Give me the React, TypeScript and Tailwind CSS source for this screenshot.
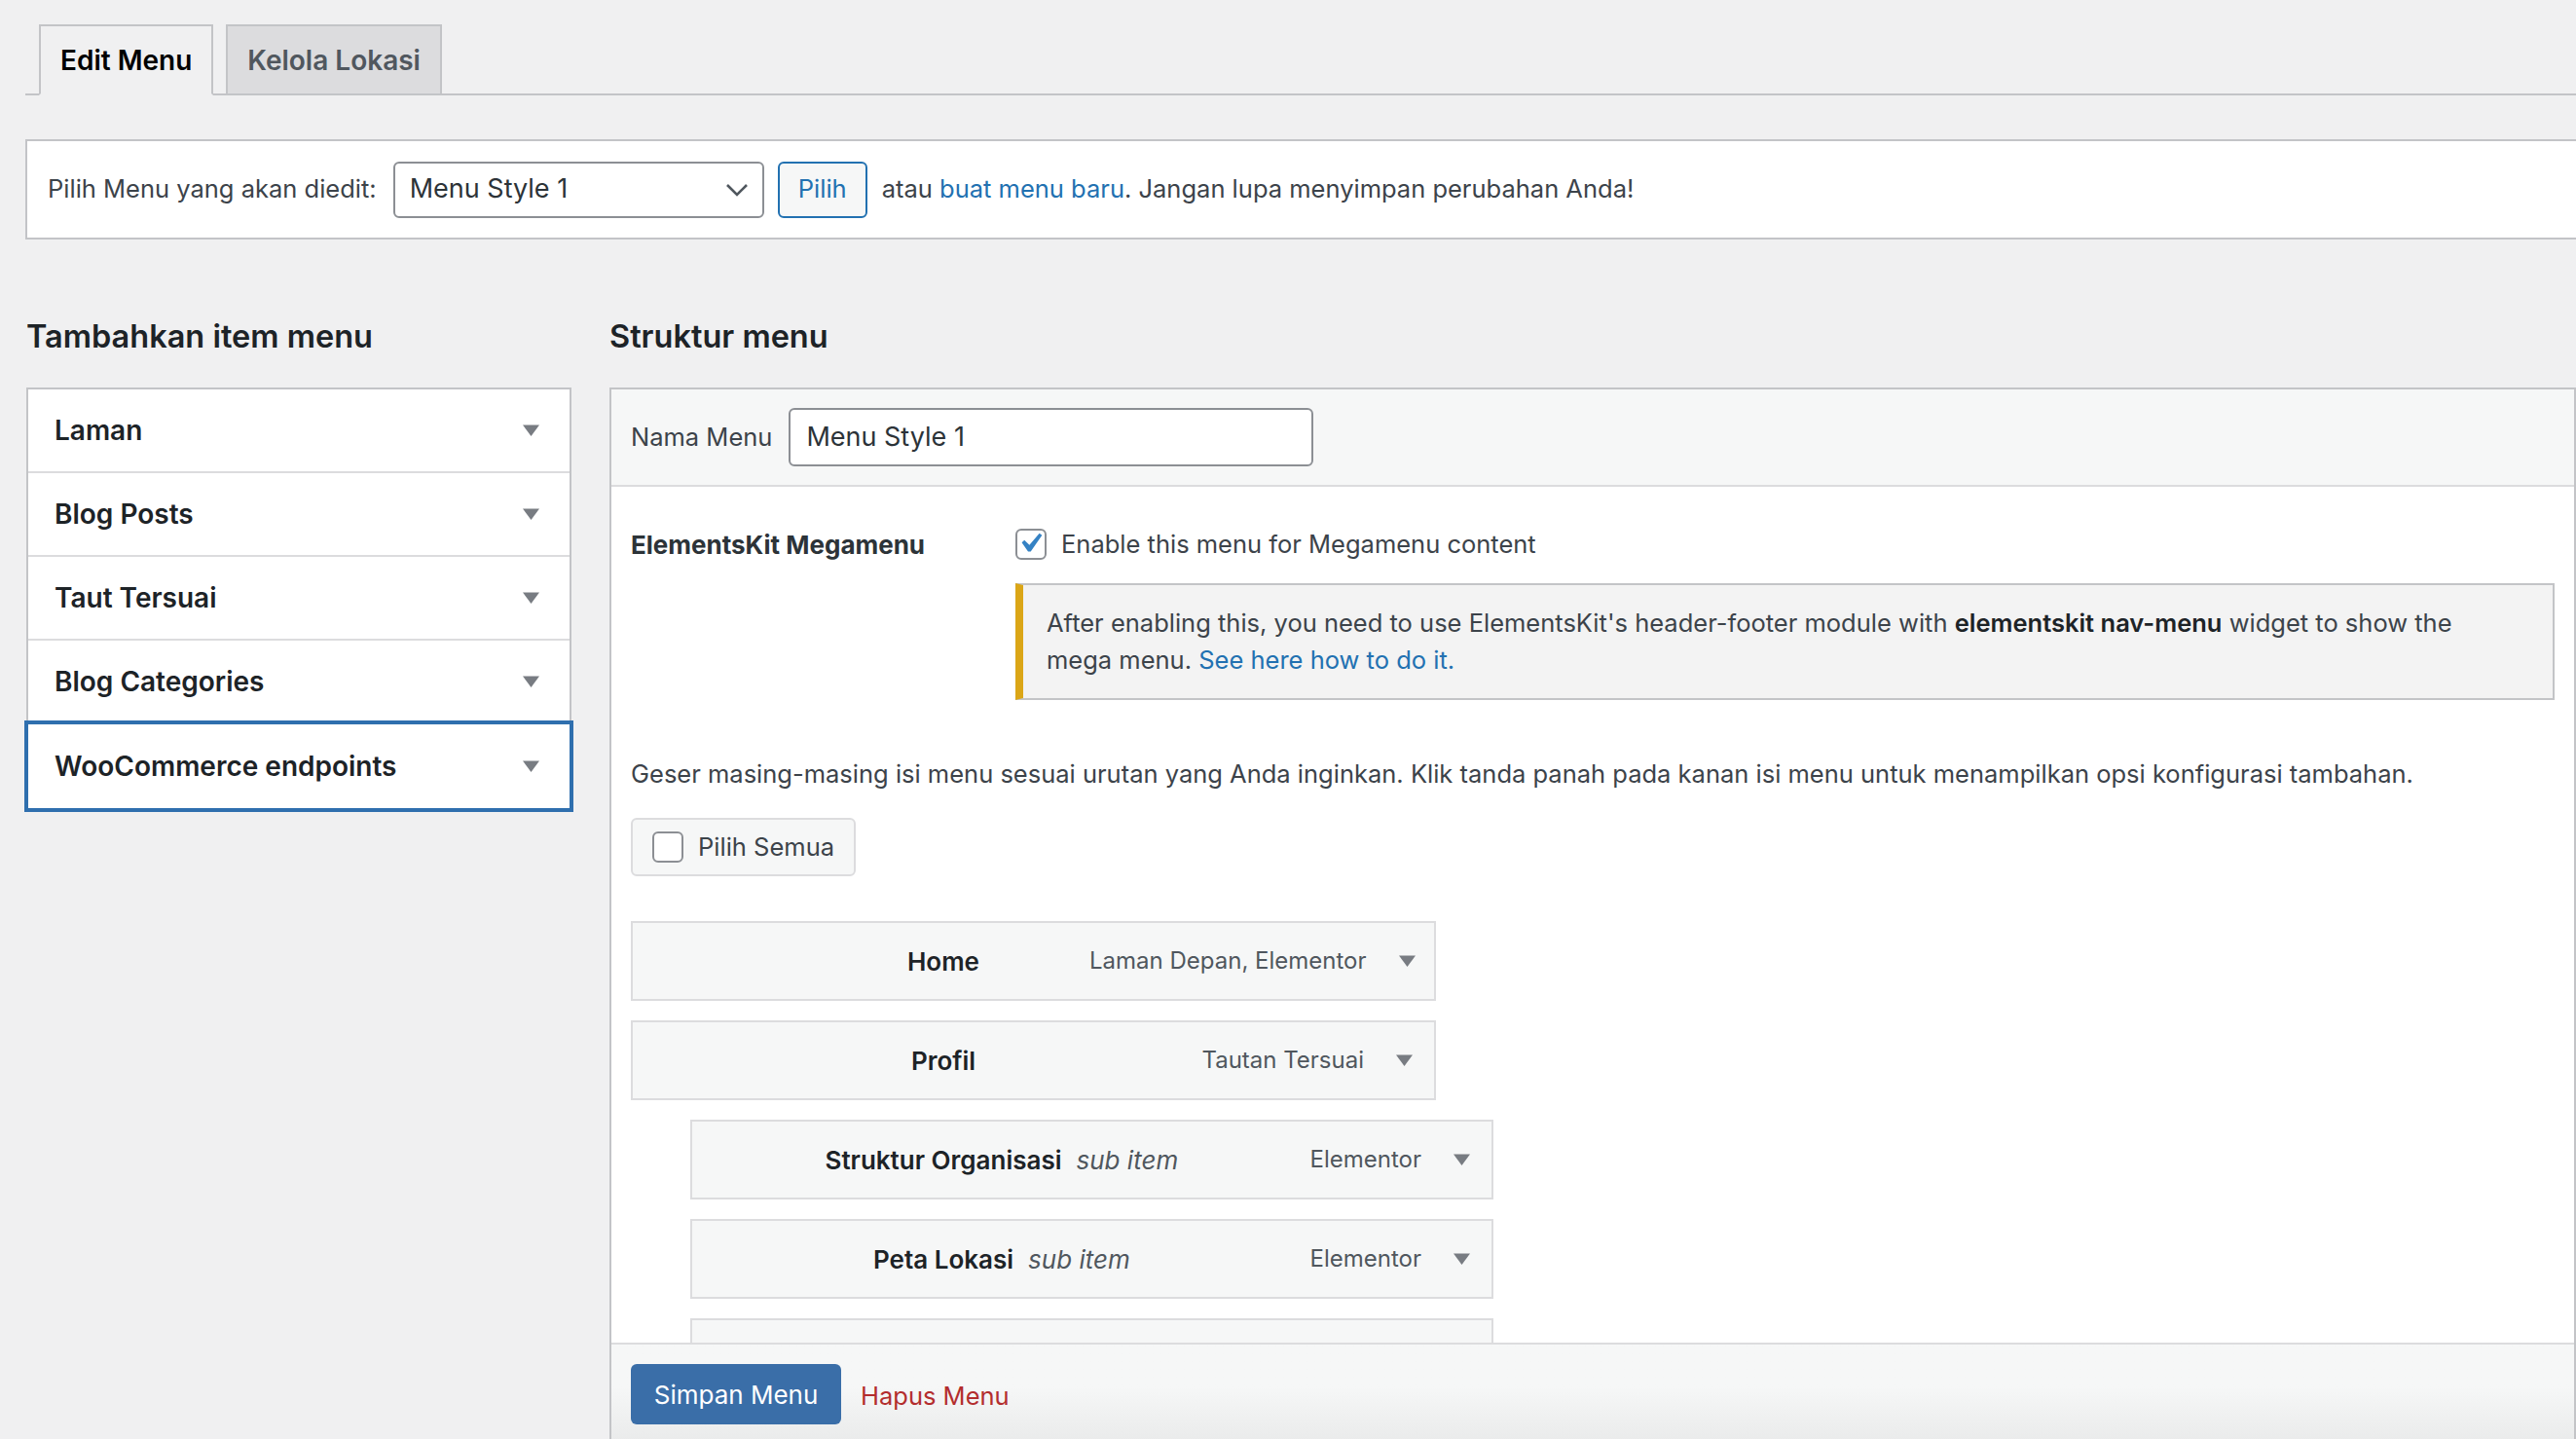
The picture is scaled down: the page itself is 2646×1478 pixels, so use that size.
const accordionSections = ['Laman', 'Blog Posts', 'Taut Tersuai', 'Blog Categories', 'WooCommerce endpoints']

const menuItems = [
  { title: 'Home', type: 'Laman Depan, Elementor', sub: false },
  { title: 'Profil', type: 'Tautan Tersuai', sub: false },
  { title: 'Struktur Organisasi', type: 'Elementor', sub: true },
  { title: 'Peta Lokasi', type: 'Elementor', sub: true },
]

function Arrow() {
  return (
    <svg width="17" height="12" viewBox="0 0 17 12" className="shrink-0">
      <path d="M0 0.5h17L8.5 12z" fill="#787c82" />
    </svg>
  )
}

function Checkbox({ checked }: { checked?: boolean }) {
  return (
    <span className="flex h-[32px] w-[32px] shrink-0 items-center justify-center rounded-[6px] border-2 border-[#8c8f94] bg-white">
      {checked && (
        <svg width="40" height="40" viewBox="0 0 20 20" className="-ml-[3px] -mt-[2px] shrink-0">
          <path d="M14.83 4.89l1.34.94-5.81 8.38H9.02L5.78 9.67l1.34-1.25 2.57 2.4z" fill="#3582c4" />
        </svg>
      )}
    </span>
  )
}

function MenuItem({ title, type, sub }: { title: string; type: string; sub: boolean }) {
  return (
    <div
      className={`flex h-[82px] shrink-0 items-center border-2 border-[#dcdcde] bg-[#f6f7f7] ${
        sub ? 'ml-[61px] w-[825px]' : 'w-[827px]'
      }`}
    >
      {/* title is centred on the same x for parents and children */}
      <div
        className={`grid w-[300px] shrink-0 grid-cols-[minmax(0,1fr)_auto_minmax(0,1fr)] items-center ${
          sub ? 'ml-[108px]' : 'ml-[169px]'
        }`}
      >
        <span />
        <span className="whitespace-nowrap text-[26px] font-semibold text-[#1d2327]">{title}</span>
        <span className="whitespace-nowrap pl-[15px] text-[26px] italic text-[#50575e]">{sub ? 'sub item' : ''}</span>
      </div>
      <div className="ml-auto flex items-center pr-[22px]">
        <span className="whitespace-nowrap text-[24px] text-[#50575e]">{type}</span>
        <span className="ml-[33px]">
          <Arrow />
        </span>
      </div>
    </div>
  )
}

export default function App() {
  return (
    <div className="h-[1478px] w-[2646px] overflow-hidden bg-[#f0f0f1] font-[Inter,sans-serif] text-[#3c434a]">
      {/* tabs */}
      <div className="ml-[26px] flex h-[98px] items-end border-b-2 border-[#c3c4c7] pl-[14px]">
        <div className="-mb-[2px] flex h-[73px] items-center border-2 border-[#c3c4c7] border-b-[#f0f0f1] bg-[#f0f0f1] px-[20px] text-[28px] font-semibold text-black">
          Edit Menu
        </div>
        <div className="-mb-[2px] ml-[13px] flex h-[73px] items-center border-2 border-[#c3c4c7] bg-[#dcdcde] px-[20px] text-[28px] font-semibold text-[#50575e]">
          Kelola Lokasi
        </div>
      </div>

      {/* pilih menu */}
      <div className="ml-[26px] mt-[45px] flex h-[103px] items-center border-2 border-r-0 border-[#c3c4c7] bg-white pl-[21px] text-[25.5px]">
        <span className="whitespace-nowrap">Pilih Menu yang akan diedit:</span>
        <div className="ml-[17px] flex h-[58px] w-[381px] items-center justify-between rounded-[6px] border-2 border-[#8c8f94] pl-[15px] pr-[14px] text-[27px] text-[#2c3338]">
          <span>Menu Style 1</span>
          <svg width="24" height="14" viewBox="0 0 24 14">
            <path d="M2 2l10 10 10-10" fill="none" stroke="#50575e" strokeWidth="2.6" />
          </svg>
        </div>
        <div className="ml-[14px] flex h-[58px] w-[92px] items-center justify-center rounded-[6px] border-2 border-[#2271b1] bg-[#f6f7f7] text-[25.5px] text-[#2271b1]">
          Pilih
        </div>
        <span className="ml-[15px] whitespace-nowrap">
          atau <span className="text-[#2271b1]">buat menu baru</span>. Jangan lupa menyimpan perubahan Anda!
        </span>
      </div>

      <div className="ml-[27px] mt-[80px] flex">
        {/* left column */}
        <div className="w-[560px] shrink-0">
          <h2 className="mb-[32px] h-[40px] text-[32.5px] font-semibold leading-[40px] text-[#1d2327]">Tambahkan item menu</h2>
          <div className="border-2 border-[#c3c4c7] bg-white">
            {accordionSections.map((name, i) => {
              const last = i === accordionSections.length - 1
              return (
                <div
                  key={name}
                  className={`relative flex h-[86px] items-center justify-between pl-[27px] pr-[31px] ${
                    last ? 'z-10 outline-4 outline-[#2f6fae]' : 'border-b-2 border-[#dcdcde]'
                  }`}
                >
                  <span className="text-[28px] font-semibold text-[#1d2327]">{name}</span>
                  <Arrow />
                </div>
              )
            })}
          </div>
        </div>

        {/* right column */}
        <div className="ml-[39px] flex-1">
          <h2 className="mb-[32px] h-[40px] text-[32.5px] font-semibold leading-[40px] text-[#1d2327]">Struktur menu</h2>
          <div className="border-2 border-b-0 border-[#c3c4c7] bg-white">
            <div className="flex h-[100px] items-center border-b-2 border-[#dcdcde] bg-[#f6f7f7] pl-[20px]">
              <span className="text-[25.5px]">Nama Menu</span>
              <div className="ml-[17px] flex h-[60px] w-[539px] items-center rounded-[6px] border-2 border-[#8c8f94] bg-white pl-[16px] text-[27px] text-[#2c3338]">
                Menu Style 1
              </div>
            </div>

            <div className="flex h-[879px] flex-col overflow-hidden pl-[20px] pr-[20px] text-[25.5px]">
              <div className="mt-[40px] grid grid-cols-[395px_1fr]">
                <div className="flex h-[38px] items-center text-[26px] font-bold text-[#2c3338]">ElementsKit Megamenu</div>
                <div>
                  <div className="flex h-[38px] items-center">
                    <Checkbox checked />
                    <span className="ml-[15px]">Enable this menu for Megamenu content</span>
                  </div>
                  <div className="mt-[21px] border-2 border-l-8 border-[#c3c4c7] border-l-[#dba617] bg-[#f3f3f3] py-[20px] pl-[24px] pr-[24px] leading-[38px]">
                    After enabling this, you need to use ElementsKit's header-footer module with{' '}
                    <b className="font-semibold text-[#1d2327]">elementskit nav-menu</b> widget to show the
                    <br />
                    mega menu. <span className="text-[#2271b1]">See here how to do it.</span>
                  </div>
                </div>
              </div>

              <p className="mt-[57px] whitespace-nowrap leading-[38px]">
                Geser masing-masing isi menu sesuai urutan yang Anda inginkan. Klik tanda panah pada kanan isi menu untuk menampilkan opsi konfigurasi tambahan.
              </p>

              <div className="mt-[26px] flex h-[60px] w-[231px] shrink-0 items-center rounded-[6px] border-2 border-[#dcdcde] bg-[#f6f7f7] pl-[20px]">
                <Checkbox />
                <span className="ml-[15px]">Pilih Semua</span>
              </div>

              <div className="mt-[46px] flex flex-col gap-[20px]">
                {menuItems.map(item => (
                  <MenuItem key={item.title} {...item} />
                ))}
                {/* next child item, cut off by the footer */}
                <div className="ml-[61px] h-[82px] w-[825px] shrink-0 border-2 border-[#dcdcde] bg-[#f6f7f7]" />
              </div>
            </div>

            <div className="flex h-[110px] items-start border-t-2 border-[#dcdcde] bg-gradient-to-b from-[#f6f7f7] from-40% to-[#e8e9e9] pl-[20px] pt-[20px]">
              <div className="flex h-[62px] w-[216px] items-center justify-center rounded-[6px] bg-[#3a6ea8] text-[26px] text-white">
                Simpan Menu
              </div>
              <span className="ml-[20px] mt-[14px] text-[25.5px] text-[#b32d2e]">Hapus Menu</span>
            </div>
          </div>
        </div>
      </div>
    </div>
  )
}
